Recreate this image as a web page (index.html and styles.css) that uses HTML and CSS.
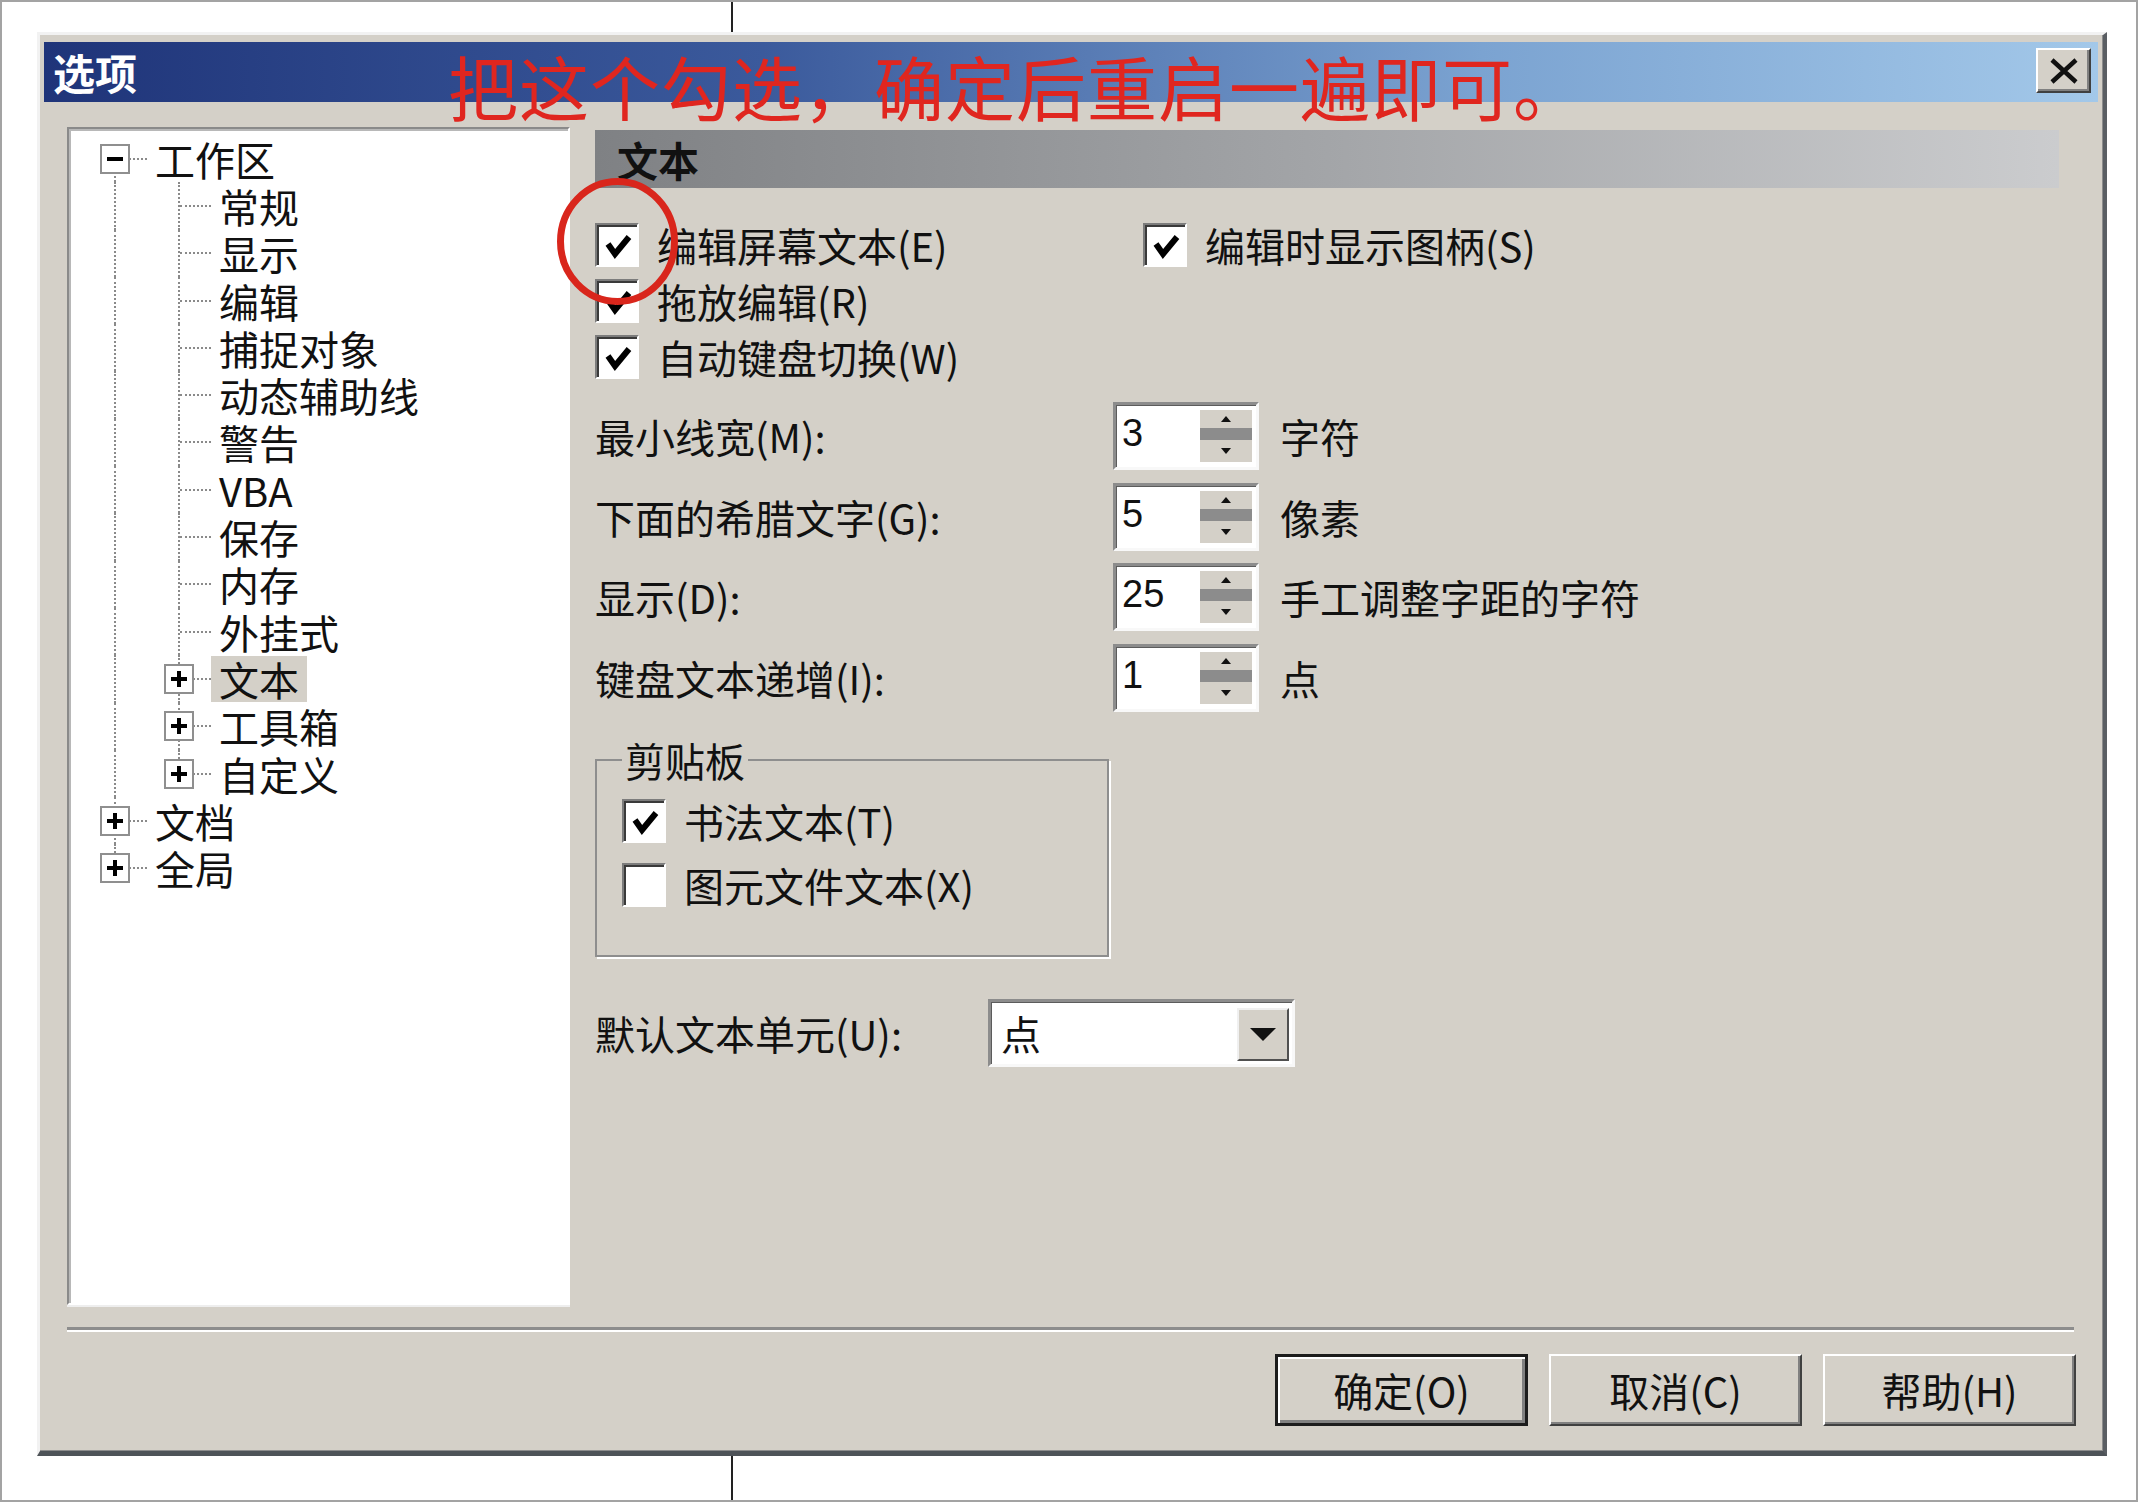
FILE: index.html
```html
<!DOCTYPE html>
<html lang="zh-CN">
<head>
    <meta charset="UTF-8">
    <title>选项</title>
    <link rel="stylesheet" href="styles.css">
</head>
<body>
<div class="page">
    <div class="cut-line"></div>

    <div class="dialog">
        <div class="titlebar">
            <span class="title">选项</span>
            <button class="close">
                <svg width="30" height="26" viewBox="0 0 30 26"><path d="M3 2 L27 24 M27 2 L3 24" stroke="#111" stroke-width="4.5" fill="none"/></svg>
            </button>
        </div>

        <!-- пометка поверх окна -->
        <div class="note">把这个勾选，确定后重启一遍即可。</div>
        <svg class="ring" width="121" height="127" viewBox="0 0 121 127"><ellipse cx="60.5" cy="63.5" rx="57" ry="60" fill="none" stroke="#d9261c" stroke-width="7"/></svg>

        <div class="dialog-body">
            <div class="tree">
                <div class="node"><span class="cell vb hl"><i class="exp"></i></span><span class="lbl">工作区</span></div>
                <div class="node"><span class="cell vf"></span><span class="cell vf hl"></span><span class="lbl">常规</span></div>
                <div class="node"><span class="cell vf"></span><span class="cell vf hl"></span><span class="lbl">显示</span></div>
                <div class="node"><span class="cell vf"></span><span class="cell vf hl"></span><span class="lbl">编辑</span></div>
                <div class="node"><span class="cell vf"></span><span class="cell vf hl"></span><span class="lbl">捕捉对象</span></div>
                <div class="node"><span class="cell vf"></span><span class="cell vf hl"></span><span class="lbl">动态辅助线</span></div>
                <div class="node"><span class="cell vf"></span><span class="cell vf hl"></span><span class="lbl">警告</span></div>
                <div class="node"><span class="cell vf"></span><span class="cell vf hl"></span><span class="lbl">VBA</span></div>
                <div class="node"><span class="cell vf"></span><span class="cell vf hl"></span><span class="lbl">保存</span></div>
                <div class="node"><span class="cell vf"></span><span class="cell vf hl"></span><span class="lbl">内存</span></div>
                <div class="node"><span class="cell vf"></span><span class="cell vf hl"></span><span class="lbl">外挂式</span></div>
                <div class="node"><span class="cell vf"></span><span class="cell vf hl"><i class="exp plus"></i></span><span class="lbl sel">文本</span></div>
                <div class="node"><span class="cell vf"></span><span class="cell vf hl"><i class="exp plus"></i></span><span class="lbl">工具箱</span></div>
                <div class="node"><span class="cell vf"></span><span class="cell vt hl"><i class="exp plus"></i></span><span class="lbl">自定义</span></div>
                <div class="node"><span class="cell vf hl"><i class="exp plus"></i></span><span class="lbl">文档</span></div>
                <div class="node"><span class="cell vt hl"><i class="exp plus"></i></span><span class="lbl">全局</span></div>
            </div>

            <div class="pane">
                <div class="pane-head">文本</div>

                <div class="checks">
                    <label class="check"><span class="box"><svg width="40" height="40" viewBox="0 0 40 40"><path d="M11 19 L18 29 L32 12" stroke="#000" stroke-width="6" fill="none"/></svg></span>编辑屏幕文本(E)</label>
                    <label class="check"><span class="box"><svg width="40" height="40" viewBox="0 0 40 40"><path d="M11 19 L18 29 L32 12" stroke="#000" stroke-width="6" fill="none"/></svg></span>编辑时显示图柄(S)</label>
                    <label class="check"><span class="box"><svg width="40" height="40" viewBox="0 0 40 40"><path d="M11 19 L18 29 L32 12" stroke="#000" stroke-width="6" fill="none"/></svg></span>拖放编辑(R)</label>
                    <span></span>
                    <label class="check"><span class="box"><svg width="40" height="40" viewBox="0 0 40 40"><path d="M11 19 L18 29 L32 12" stroke="#000" stroke-width="6" fill="none"/></svg></span>自动键盘切换(W)</label>
                </div>

                <div class="spins">
                    <span>最小线宽(M):</span>
                    <div class="spin"><span class="spin-val">3</span><span class="spin-btns"><i class="up"></i><i class="mid"></i><i class="down"></i></span></div>
                    <span>字符</span>

                    <span>下面的希腊文字(G):</span>
                    <div class="spin"><span class="spin-val">5</span><span class="spin-btns"><i class="up"></i><i class="mid"></i><i class="down"></i></span></div>
                    <span>像素</span>

                    <span>显示(D):</span>
                    <div class="spin"><span class="spin-val">25</span><span class="spin-btns"><i class="up"></i><i class="mid"></i><i class="down"></i></span></div>
                    <span>手工调整字距的字符</span>

                    <span>键盘文本递增(I):</span>
                    <div class="spin"><span class="spin-val">1</span><span class="spin-btns"><i class="up"></i><i class="mid"></i><i class="down"></i></span></div>
                    <span>点</span>
                </div>

                <fieldset class="group">
                    <legend>剪贴板</legend>
                    <div class="group-list">
                        <label class="check"><span class="box"><svg width="40" height="40" viewBox="0 0 40 40"><path d="M11 19 L18 29 L32 12" stroke="#000" stroke-width="6" fill="none"/></svg></span>书法文本(T)</label>
                        <label class="check"><span class="box"></span>图元文件文本(X)</label>
                    </div>
                </fieldset>

                <div class="unit-row">
                    <span>默认文本单元(U):</span>
                    <div class="combo"><span class="combo-val">点</span><span class="combo-btn"><i></i></span></div>
                </div>
            </div>
        </div>

        <div class="sep"></div>

        <div class="buttons">
            <button class="btn default">确定(O)</button>
            <button class="btn">取消(C)</button>
            <button class="btn">帮助(H)</button>
        </div>
    </div>
</div>
</body>
</html>
```

FILE: styles.css
```css
* {
    margin: 0;
    padding: 0;
    box-sizing: border-box;
}

body {
    width: 2138px;
    height: 1502px;
    background: #ffffff;
    font-family: "Noto Sans CJK SC", "Noto Sans", sans-serif;
    color: #111111;
    overflow: hidden;
}

.page {
    position: relative;
    height: 100%;
    border: 2px solid #a3a3a3;
    padding: 30px 0 0 35px;
}

.cut-line {
    position: absolute;
    left: 729px;
    top: 0;
    bottom: 0;
    width: 2px;
    background: #222222;
}

.dialog {
    position: relative;
    z-index: 1;
    width: 2070px;
    height: 1424px;
    background: #d4d0c8;
    border: 3px solid;
    border-right-width: 4px;
    border-bottom-width: 5px;
    border-color: #f2f2f2 #5a5e63 #4e5358 #f2f2f2;
    box-shadow: inset -1px -1px 0 #8c8c8c;
    padding: 7px 5px 0 4px;
}

.titlebar {
    height: 60px;
    background: linear-gradient(90deg, #1f3479 0%, #3b5a9c 35%, #7ba3d1 70%, #a3c8e9 100%);
    display: flex;
    justify-content: space-between;
    align-items: flex-start;
    padding: 0 7px 0 9px;
}

.title {
    color: #ffffff;
    font-weight: 700;
    font-size: 42px;
    line-height: 60px;
}

.close {
    margin-top: 6px;
    width: 55px;
    height: 45px;
    background: #d4d0c8;
    border: 2px solid;
    border-color: #ffffff #404040 #404040 #ffffff;
    box-shadow: inset -2px -2px 0 #808080;
    display: flex;
    align-items: center;
    justify-content: center;
}

.note {
    position: absolute;
    z-index: 2;
    left: 408px;
    top: 16px;
    font-size: 70px;
    letter-spacing: 1px;
    line-height: 1;
    color: #e0261f;
    white-space: nowrap;
}

.ring {
    position: absolute;
    z-index: 2;
    left: 517px;
    top: 143px;
}

.dialog-body {
    display: flex;
    gap: 25px;
    margin-top: 25px;
    padding: 0 24px 0 23px;
}

/* дерево слева */
.tree {
    flex: none;
    width: 503px;
    height: 1178px;
    background: #ffffff;
    border: 2px solid;
    border-color: #8a8a8a #ffffff #ffffff #8a8a8a;
    box-shadow: inset 2px 2px 0 #b8b8b8, 0 2px 0 #eeeeee;
    padding: 6px 0 0 14px;
}

.node {
    display: flex;
    height: 47.3px;
    align-items: center;
}

.cell {
    position: relative;
    flex: none;
    width: 64px;
    height: 100%;
}

.cell::before {
    content: "";
    position: absolute;
    left: 31px;
    border-left: 2px dotted #8a8a8a;
}

.cell.vf::before { top: 0; bottom: 0; }
.cell.vt::before { top: 0; height: 50%; }
.cell.vb::before { top: 50%; bottom: 0; }

.cell.hl::after {
    content: "";
    position: absolute;
    left: 33px;
    right: 0;
    top: calc(50% - 1px);
    border-top: 2px dotted #8a8a8a;
}

.exp {
    position: absolute;
    z-index: 1;
    left: 17px;
    top: calc(50% - 15px);
    width: 30px;
    height: 30px;
    background: #ffffff;
    border: 2px solid #8f8f8f;
}

.exp::before {
    content: "";
    position: absolute;
    left: 5px;
    top: 11px;
    width: 16px;
    height: 4px;
    background: #000000;
}

.exp.plus::after {
    content: "";
    position: absolute;
    left: 11px;
    top: 5px;
    width: 4px;
    height: 16px;
    background: #000000;
}

.lbl {
    font-size: 40px;
    line-height: 46px;
    padding: 0 8px;
    white-space: nowrap;
}

.lbl.sel {
    background: #d4d0c8;
}

/* правая часть */
.pane {
    flex: 1;
    margin-top: 3px;
    font-size: 40px;
}

.pane-head {
    height: 58px;
    margin-right: 15px;
    background: linear-gradient(90deg, #7f8184 0%, #a3a5a8 50%, #cbccce 100%);
    font-weight: 700;
    font-size: 41px;
    line-height: 58px;
    padding-left: 22px;
}

.checks {
    display: grid;
    grid-template-columns: 548px 1fr;
    grid-auto-rows: 56px;
    margin-top: 29px;
}

.check {
    display: flex;
    align-items: center;
    gap: 18px;
    white-space: nowrap;
}

.box {
    flex: none;
    width: 44px;
    height: 44px;
    background: #ffffff;
    border: 2px solid;
    border-color: #7c7c7c #ffffff #ffffff #7c7c7c;
    box-shadow: inset 2px 2px 0 #3a3a3a;
}

.box svg {
    display: block;
}

.spins {
    display: grid;
    grid-template-columns: 518px 146px auto;
    grid-auto-rows: 68px;
    row-gap: 12.5px;
    align-items: center;
    margin-top: 17px;
    white-space: nowrap;
}

.spins > span:nth-child(3n) {
    padding-left: 21px;
}

.spin,
.combo {
    display: flex;
    height: 68px;
    background: #ffffff;
    border: 3px solid;
    border-color: #8c8c8c #f8f8f8 #f8f8f8 #8c8c8c;
    box-shadow: inset 1px 1px 0 #5c5c5c;
}

.spin-val {
    flex: 1;
    padding-left: 6px;
    font-family: "Liberation Sans", sans-serif;
    font-size: 38px;
    line-height: 56px;
}

.spin-btns {
    width: 52px;
    margin: 5px 4px 5px 0;
    display: flex;
    flex-direction: column;
}

.spin-btns i {
    display: flex;
    align-items: center;
    justify-content: center;
    background: #d4d0c8;
}

.spin-btns .up { height: 18px; }
.spin-btns .mid { height: 12px; background: #8c8c8c; }
.spin-btns .down { height: 22px; }

.spin-btns .up::after,
.spin-btns .down::after {
    content: "";
    border-left: 5px solid transparent;
    border-right: 5px solid transparent;
}

.spin-btns .up::after { border-bottom: 6px solid #111111; }
.spin-btns .down::after { border-top: 6px solid #111111; }

.group {
    width: 514px;
    height: 219px;
    margin-top: 26px;
    border: 2px solid #8e8e8e;
    box-shadow: 2px 2px 0 #ffffff;
    padding: 0 0 0 25px;
}

.group legend {
    padding: 0 3px;
    line-height: 44px;
}

.group-list {
    padding-top: 7px;
}

.group-list .check {
    height: 64px;
}

.unit-row {
    display: grid;
    grid-template-columns: 393px 307px;
    align-items: center;
    margin-top: 42px;
    white-space: nowrap;
}

.combo-val {
    flex: 1;
    padding-left: 10px;
    line-height: 62px;
}

.combo-btn {
    width: 52px;
    margin: 6px 3px 3px 0;
    background: #d4d0c8;
    border: 2px solid;
    border-color: #f0f0f0 #505050 #505050 #f0f0f0;
    display: flex;
    align-items: center;
    justify-content: center;
}

.combo-btn i {
    border-left: 13px solid transparent;
    border-right: 13px solid transparent;
    border-top: 13px solid #111111;
}

.sep {
    margin: 22px 24px 0 23px;
    border-top: 3px solid #8d8d8d;
    border-bottom: 2px solid #ffffff;
}

.buttons {
    display: flex;
    justify-content: flex-end;
    gap: 21px;
    margin: 22px 22px 0 0;
}

.btn {
    width: 253px;
    height: 72px;
    font-family: "Noto Sans CJK SC", "Noto Sans", sans-serif;
    font-size: 40px;
    color: #111111;
    background: #d4d0c8;
    border: 2px solid;
    border-color: #ffffff #404040 #404040 #ffffff;
    box-shadow: inset -2px -2px 0 #808080;
}

.btn.default {
    border: 3px solid #1c1c1c;
    box-shadow: inset 2px 2px 0 #ffffff, inset -3px -3px 0 #808080;
}
```
